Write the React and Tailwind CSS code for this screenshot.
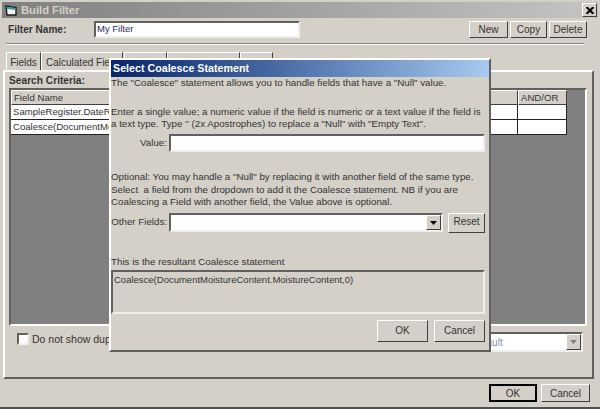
const outset = "border border-t-white border-l-white border-r-[#404040] border-b-[#404040] bg-[#d4d0c8]";
const inset = "border-2 border-t-[#606060] border-l-[#606060] border-r-[#eeeeee] border-b-[#eeeeee]";

const Button = ({ className, children }) => (
  <button className={"flex items-center justify-center text-[10px] text-[#333] " + outset + " " + className}>
    {children}
  </button>
);

const Arrow = ({ color }) => (
  <svg width="7" height="4" viewBox="0 0 7 4">
    <path d="M0 0h7L3.500 4z" fill={color} />
  </svg>
);

const Tab = ({ className, children }) => (
  <div className={"flex h-[18px] items-center justify-center whitespace-nowrap border border-b-0 border-t-white border-l-white border-r-[#404040] pt-[1px] text-[10px] text-[#333] " + className}>
    {children}
  </div>
);

const Dialog = () => (
  <div className="absolute left-[109px] top-[58px] flex h-[294px] w-[382px] flex-col border-2 border-t-white border-l-white border-r-[#606060] border-b-[#606060] bg-[#d4d0c8] text-[9.75px] leading-[12.5px] text-[#333]">
    <div className="flex h-[17px] shrink-0 items-center bg-gradient-to-r from-[#0a246a] to-[#a6caf0] pl-[2px] text-[10.7px] font-bold text-white">
      Select Coalesce Statement
    </div>
    <p className="h-[12px] whitespace-nowrap">The "Coalesce" statement allows you to handle fields that have a "Null" value.</p>
    <p className="mt-[17px] whitespace-nowrap leading-[12px]">
      Enter a single value; a numeric value if the field is numeric or a text value if the field is
      <br />
      a text type. Type '' (2x Apostrophes) to replace a "Null" with "Empty Text".
    </p>
    <div className="mt-[4px] flex items-center">
      <span className="w-[58px] whitespace-nowrap pr-[2px] text-right">Value:</span>
      <div className={"h-[18px] w-[316px] bg-white " + inset} />
    </div>
    <p className="mt-[19px] whitespace-nowrap">
      Optional: You may handle a "Null" by replacing it with another field of the same type.
      <br />
      Select&nbsp; a field from the dropdown to add it the Coalesce statement. NB if you are
      <br />
      Coalescing a Field with another field, the Value above is optional.
    </p>
    <div className="mt-[4px] flex items-center">
      <span className="w-[58px] whitespace-nowrap pr-[2px] text-right">Other Fields:</span>
      <div className={"flex h-[19px] w-[274px] justify-end bg-white " + inset}>
        <div className={"flex w-[15px] items-center justify-center " + outset}>
          <Arrow color="#000" />
        </div>
      </div>
      <Button className="ml-[5px] h-[20px] w-[37px]">Reset</Button>
    </div>
    <p className="mt-[23px] whitespace-nowrap">This is the resultant Coalesce statement</p>
    <div className={"mt-[2px] h-[44px] w-[374px] px-[1px] pt-[2px] text-[9.5px] " + inset}>
      Coalesce(DocumentMoistureContent.MoistureContent,0)
    </div>
    <div className="mt-[6px] flex justify-end gap-[6px] pr-[4px]">
      <Button className="h-[22px] w-[51px]">OK</Button>
      <Button className="h-[22px] w-[51px]">Cancel</Button>
    </div>
  </div>
);

export default function App() {
  return (
    <div
      className="relative flex h-[409px] w-[600px] flex-col overflow-hidden border-b-2 border-[#505050] bg-[#d4d0c8] text-[#333]"
      style={{ fontFamily: '"Liberation Sans", Arial, sans-serif' }}
    >
      {/* title bar */}
      <div className="mx-[2px] mt-[2px] flex h-[16px] shrink-0 items-center justify-between bg-gradient-to-r from-[#808080] to-[#c4c4c4] pl-[3px] pr-[1px]">
        <div className="flex items-center gap-[4px] text-[11.2px] font-bold text-[#d4d0c8]">
          <svg width="12" height="11" viewBox="0 0 12 11">
            <path d="M1 1L11 2.500V10H2z" fill="#f4f4f4" stroke="#14201f" strokeWidth="1.400" />
            <path d="M1.500 1.500L10.500 3V5L2 4z" fill="#3f9f98" />
          </svg>
          Build Filter
        </div>
        <div className={"flex h-[14px] w-[15px] items-center justify-center " + outset}>
          <svg width="8" height="7" viewBox="0 0 8 7">
            <path d="M0.500 0L7.500 7M7.500 0L0.500 7" stroke="#000" strokeWidth="2" />
          </svg>
        </div>
      </div>

      {/* filter name row */}
      <div className="mt-[3px] flex h-[17px] shrink-0 items-center pl-[8px] pr-[13px]">
        <span className="w-[86px] text-[10.1px] font-bold">Filter Name:</span>
        <div className={"flex h-[17px] w-[206px] items-center bg-white pl-[1px] text-[9.5px] text-[#1f2a5a] " + inset}>My Filter</div>
        <div className="ml-auto flex gap-[2px]">
          <Button className="h-[17px] w-[39px]">New</Button>
          <Button className="h-[17px] w-[37px]">Copy</Button>
          <Button className="h-[17px] w-[38px]">Delete</Button>
        </div>
      </div>

      <div className="mx-[6px] mt-[5px] h-[2px] w-[578px] shrink-0 border-t border-b border-t-[#808080] border-b-white" />

      {/* tabs */}
      <div className="mt-[7px] flex h-[18px] shrink-0 pl-[6px]">
        <Tab className="w-[35px]">Fields</Tab>
        <Tab className="w-[82px] justify-start pl-[4px]">Calculated Fields</Tab>
        <Tab className="ml-[1px] w-[43px]" />
        <Tab className="w-[73px]" />
        <Tab className="w-[33px]" />
      </div>

      {/* tab panel */}
      <div className="mx-[3px] flex h-[309px] w-[591px] shrink-0 flex-col border-2 border-t-white border-l-white border-r-[#606060] border-b-[#606060] px-[4px]">
        <span className="mt-[1px] h-[14px] text-[10.2px] font-bold">Search Criteria:</span>
        <div className="mt-[1px] h-[238px] w-[578px] shrink-0 border-2 border-t-[#606060] border-l-[#606060] border-r-white border-b-white bg-[#808080]">
          <div className="grid w-[556px] grid-cols-[507px_49px] grid-rows-[15px_15px_15px] text-[9.6px] leading-[14px]">
            <div className={"flex items-center pl-[2px] " + outset}>Field Name</div>
            <div className={"flex items-center pl-[2px] " + outset}>AND/OR</div>
            <div className="overflow-hidden whitespace-nowrap border-r border-b border-[#222] bg-white pl-[2px]">SampleRegister.DateReceived</div>
            <div className="border-r border-b border-[#222] bg-white" />
            <div className="overflow-hidden whitespace-nowrap border-r border-b border-[#222] bg-white pl-[2px]">Coalesce(DocumentMoistureContent.MoistureContent,0)</div>
            <div className="border-r border-b border-[#222] bg-white" />
          </div>
        </div>
        <div className="mt-[6px] flex items-start pl-[8px]">
          <div className={"mt-[1px] h-[12px] w-[12px] bg-white " + inset} />
          <span className="ml-[3px] text-[10.5px]">Do not show duplicates</span>
          <div className={"ml-auto mr-[5px] flex h-[20px] w-[116px] items-center justify-between bg-white pl-[2px] text-[10px] text-[#8a8fa8] " + inset}>
            Default
            <div className={"flex h-full w-[15px] items-center justify-center " + outset}>
              <Arrow color="#808080" />
            </div>
          </div>
        </div>
      </div>

      {/* footer */}
      <div className="mt-[5px] flex justify-end gap-[4px] pr-[10px]">
        <Button className="h-[18px] w-[48px] border-2 !border-black">OK</Button>
        <Button className="h-[18px] w-[49px]">Cancel</Button>
      </div>

      <Dialog />
    </div>
  );
}
